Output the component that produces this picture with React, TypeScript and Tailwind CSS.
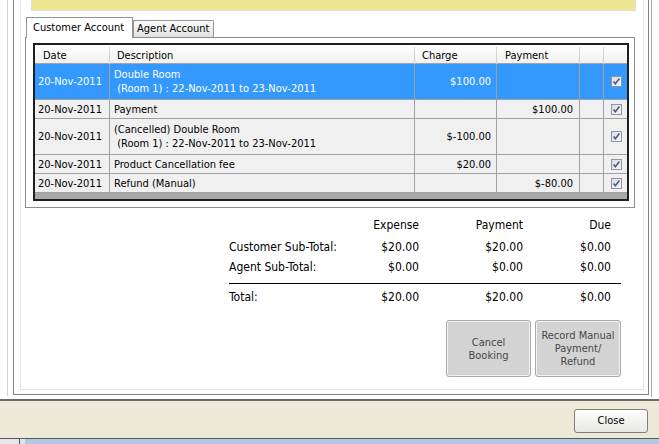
import React from "react";

const Check = () => (
  <svg width="11" height="11" viewBox="0 0 11 11" className="block">
    <defs>
      <linearGradient id="cbg" x1="0" y1="0" x2="1" y2="1">
        <stop offset="0" stopColor="#d9dce2" />
        <stop offset="1" stopColor="#f7f7f8" />
      </linearGradient>
    </defs>
    <rect x="0.5" y="0.5" width="10" height="10" fill="url(#cbg)" stroke="#8d96a3" />
    <path d="M2.6 5.4 L4.4 7.8 L8.4 2.6" fill="none" stroke="#4c5a86" strokeWidth="1.6" />
  </svg>
);

type Row = {
  date: string;
  desc: string[];
  charge: string;
  payment: string;
  tall?: boolean;
  selected?: boolean;
};

const rows: Row[] = [
  { date: "20-Nov-2011", desc: ["Double Room", "\u00a0(Room 1) : 22-Nov-2011 to 23-Nov-2011"], charge: "$100.00", payment: "", tall: true, selected: true },
  { date: "20-Nov-2011", desc: ["Payment"], charge: "", payment: "$100.00" },
  { date: "20-Nov-2011", desc: ["(Cancelled) Double Room", "\u00a0(Room 1) : 22-Nov-2011 to 23-Nov-2011"], charge: "$-100.00", payment: "", tall: true },
  { date: "20-Nov-2011", desc: ["Product Cancellation fee"], charge: "$20.00", payment: "" },
  { date: "20-Nov-2011", desc: ["Refund (Manual)"], charge: "", payment: "$-80.00" },
];

export default function App() {
  return (
    <div
      className="w-[659px] h-[444px] overflow-hidden bg-white flex flex-col text-[11px] text-black"
      style={{ fontFamily: '"DejaVu Sans Condensed", "DejaVu Sans", sans-serif' }}
    >
      {/* upper area */}
      <div className="h-[399px] flex shrink-0">
        <div className="w-[7px]" />
        <div className="w-px h-[396px] bg-[#d2d2d2]" />
        <div className="w-[5px]" />
        <div className="w-[636px] h-[395px] border-x border-b border-[#828282] pl-[6px] pr-[4px] pb-[4px]">
          <div className="h-full border-x border-b border-[#e2e2e2] flex flex-col">
            {/* yellow message box */}
            <div className="ml-[10px] w-[605px] h-[11px] bg-[#efe691] border-x border-b border-[#e0e0dc]" />
            {/* tabs */}
            <div className="mt-[6px] ml-[4px] flex flex-col">
              <div className="flex items-end h-[20px] pl-px">
                <div className="relative z-10 -mb-px h-[21px] w-[107px] bg-white border-l border-t border-r border-[#8e9596] pl-[6px] pt-[2px] leading-[16px]">
                  Customer Account
                </div>
                <div className="h-[17px] w-[81px] bg-linear-to-b from-[#fbfbfb] to-[#e2e2e2] border-l border-t border-r border-[#8e9596] rounded-tr-[2px] pl-[3px] leading-[16px]">
                  Agent Account
                </div>
              </div>
              {/* tab panel */}
              <div className="w-[610px] h-[171px] border border-[#8c8c8c] pl-[7px] pr-[5px] pt-[5px]">
                <div className="w-[596px] h-[158px] border-2 border-[#1f1f1f] bg-[#a9a9a9] flex flex-col">
                  <div className="grid grid-cols-[75px_305px_82px_83px_24px_23px] h-[19px] bg-linear-to-b from-white to-[#f1f1f1] border-b border-[#a4a4a4] leading-[18px] pt-[2px]">
                    <div className="pl-[8px] border-r border-[#d4d4d4]">Date</div>
                    <div className="pl-[7px] border-r border-[#d4d4d4]">Description</div>
                    <div className="pl-[7px] border-r border-[#d4d4d4]">Charge</div>
                    <div className="pl-[8px] border-r border-[#d4d4d4]">Payment</div>
                    <div className="border-r border-[#d4d4d4]" />
                    <div />
                  </div>
                  {rows.map((r, i) => {
                    const h = r.tall ? "h-[36px]" : "h-[19px]";
                    const bg = r.selected ? "bg-[#3399ff] text-white" : "bg-[#f0f0f0] text-black";
                    return (
                      <div
                        key={i}
                        className={`grid grid-cols-[75px_305px_82px_83px_24px_23px] ${h} ${bg} border-b border-[#a0a0a0]`}
                      >
                        <div className="pl-[3px] pt-[2px] border-r border-[#a0a0a0] flex items-center">{r.date}</div>
                        <div className="pl-[4px] pt-px border-r border-[#a0a0a0] flex flex-col justify-center leading-[14px]">
                          {r.desc.map((d, j) => (
                            <div key={j} className="whitespace-pre">{d}</div>
                          ))}
                        </div>
                        <div className="pr-[5px] pt-px border-r border-[#a0a0a0] flex items-center justify-end">{r.charge}</div>
                        <div className="pr-[6px] pt-px border-r border-[#a0a0a0] flex items-center justify-end">{r.payment}</div>
                        <div className="border-r border-[#a0a0a0]" />
                        <div className="flex items-center justify-center pl-px">
                          <Check />
                        </div>
                      </div>
                    );
                  })}
                </div>
              </div>
            </div>
            {/* totals */}
            <div className="ml-[208px] mt-[7px] w-[392px] flex flex-col text-[12px]">
              <div className="grid grid-cols-[112px_78px_104px_88px_10px] h-[20px] items-center">
                <div />
                <div className="text-right">Expense</div>
                <div className="text-right">Payment</div>
                <div className="text-right">Due</div>
                <div />
              </div>
              <div className="mt-[2px] grid grid-cols-[112px_78px_104px_88px_10px] h-[20px] items-center">
                <div className="whitespace-nowrap">Customer Sub-Total:</div>
                <div className="text-right">$20.00</div>
                <div className="text-right">$20.00</div>
                <div className="text-right">$0.00</div>
                <div />
              </div>
              <div className="grid grid-cols-[112px_78px_104px_88px_10px] h-[20px] items-center">
                <div className="whitespace-nowrap">Agent Sub-Total:</div>
                <div className="text-right">$0.00</div>
                <div className="text-right">$0.00</div>
                <div className="text-right">$0.00</div>
                <div />
              </div>
              <div className="mt-[6px] h-px bg-black" />
              <div className="mt-[3px] grid grid-cols-[112px_78px_104px_88px_10px] h-[20px] items-center">
                <div>Total:</div>
                <div className="text-right">$20.00</div>
                <div className="text-right">$20.00</div>
                <div className="text-right">$0.00</div>
                <div />
              </div>
            </div>
            {/* action buttons */}
            <div className="mt-[13px] flex justify-end gap-[4px] pr-[22px]">
              <div className="w-[85px] h-[57px] rounded-[3px] border border-[#a9a9a9] bg-[#d3d3d3] shadow-[inset_0_0_0_1px_#f2f2f2] flex flex-col items-center justify-center text-center leading-[13px] text-[#474747]">
                <div>Cancel</div>
                <div>Booking</div>
              </div>
              <div className="w-[86px] h-[57px] rounded-[3px] border border-[#a9a9a9] bg-[#d3d3d3] shadow-[inset_0_0_0_1px_#f2f2f2] flex flex-col items-center justify-center text-center leading-[13px] text-[#474747]">
                <div>Record Manual</div>
                <div>Payment/</div>
                <div>Refund</div>
              </div>
            </div>
          </div>
        </div>
        <div className="w-[2px]" />
        <div className="w-px h-[397px] bg-[#a6a6a6]" />
      </div>
      {/* bottom bar */}
      <div className="h-[2px] bg-[#6d6965] shrink-0" />
      <div className="h-[37px] bg-[#ece9d8] flex justify-end pt-[8px] pr-[11px] shrink-0">
        <div className="w-[74px] h-[24px] rounded-[3px] border border-[#7f7f7f] bg-linear-to-b from-[#fdfdfd] to-[#e8e8e4] flex items-center justify-center">
          Close
        </div>
      </div>
      <div className="h-px bg-[#55595e] shrink-0" />
      <div className="flex-1 flex">
        <div className="w-[19px] bg-[#e6e6e6]" />
        <div className="w-px bg-[#555]" />
        <div className="w-[5px] bg-[#dce4ee]" />
        <div className="flex-1 bg-[#b3c7df]" />
      </div>
    </div>
  );
}
